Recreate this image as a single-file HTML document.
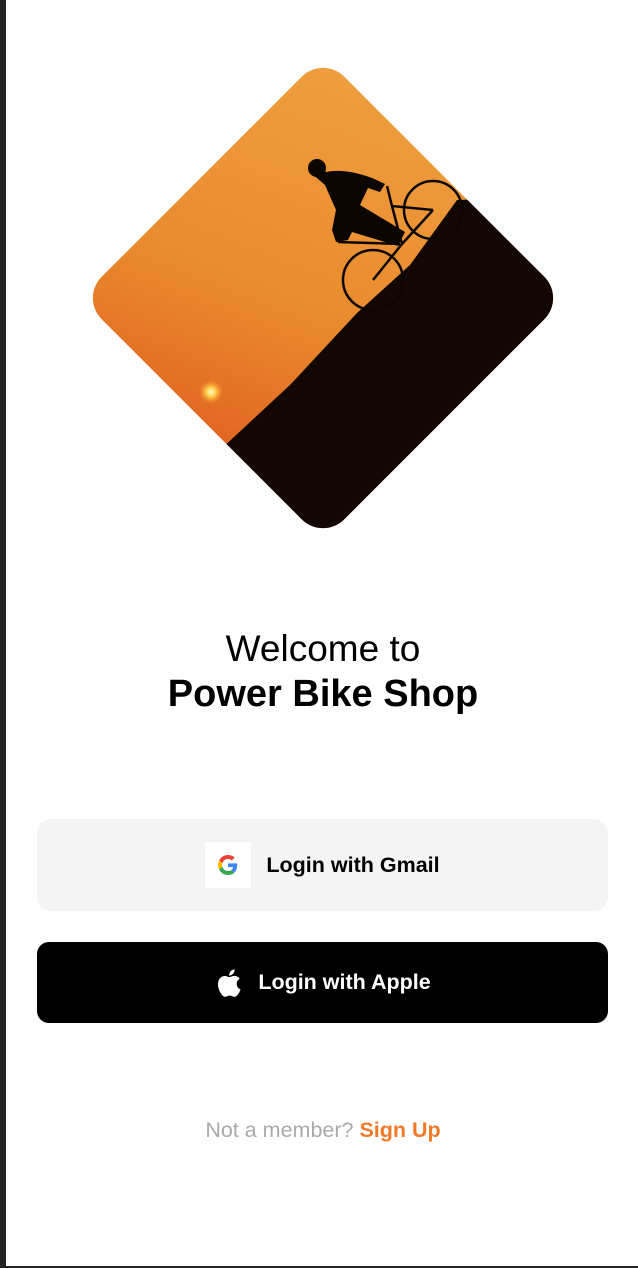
<!DOCTYPE html>
<html><head><meta charset="utf-8"><style>
html,body{margin:0;padding:0}
body{width:638px;height:1268px;position:relative;background:#fff;font-family:"Liberation Sans",sans-serif;overflow:hidden}
.lb{position:absolute;left:0;top:0;width:6px;height:1268px;background:#232323}
.bb{position:absolute;left:0;bottom:0;width:638px;height:2px;background:#232323}
.t1{position:absolute;left:0;width:646px;text-align:center;top:628px;font-size:37px;color:#000}
.t2{position:absolute;left:0;width:646px;text-align:center;top:673px;font-size:38px;font-weight:bold;color:#000}
.btn{position:absolute;left:37px;width:571px;display:flex;align-items:center;justify-content:center;font-size:21.5px;font-weight:bold}
.g{top:819px;height:92px;background:#f4f4f4;border-radius:14px;color:#000}
.a{top:942px;height:81px;background:#000;border-radius:12px;color:#fff}
.gb{width:46px;height:46px;background:#fff;display:flex;align-items:center;justify-content:center;margin-right:15px}
.foot{position:absolute;left:0;width:646px;text-align:center;top:1118px;font-size:21.5px;color:#aaa}
.foot b{color:#f07a2a}
</style></head><body>
<div class="lb"></div><div class="bb"></div>
<svg style="position:absolute;left:0;top:0" width="638" height="560">
<defs>
<clipPath id="c"><rect x="-171.5" y="-171.5" width="343" height="343" rx="30" transform="translate(323 298) rotate(45)"/></clipPath>
<linearGradient id="sky" x1="0.6" y1="0" x2="0.2" y2="1"><stop offset="0" stop-color="#eea040"/><stop offset="0.5" stop-color="#ea8a2e"/><stop offset="1" stop-color="#dc4e18"/></linearGradient>
<radialGradient id="sun"><stop offset="0" stop-color="#fffbd0"/><stop offset="0.35" stop-color="#ffd850"/><stop offset="1" stop-color="#ff9a30" stop-opacity="0"/></radialGradient>
</defs>
<g clip-path="url(#c)">
<rect x="80" y="60" width="490" height="480" fill="url(#sky)"/>
<circle cx="211" cy="392" r="12" fill="url(#sun)"/>
<polygon points="220,450 290,385 357,313 410,265 457,200 600,195 600,560 200,560" fill="#120703"/>
<g fill="none" stroke="#0c0603" stroke-width="2.5">
<circle cx="373" cy="280" r="30"/>
<circle cx="433" cy="210" r="29"/>
<path d="M373 280 L402 244 L433 210 M338 242 L400 244 M402 244 L392 206 L433 210 M392 206 L387 186"/>
</g>
<path d="M310 172 Q318 165 326 172 Q345 168 372 178 L385 184 L380 192 L368 188 L360 205 L405 232 L398 246 L352 232 L348 240 L336 242 L332 230 L336 210 L325 185 Z" fill="#0c0603"/>
<circle cx="317" cy="168" r="9" fill="#0c0603"/>
</g>
</svg>
<div class="t1">Welcome to</div>
<div class="t2">Power Bike Shop</div>
<div class="btn g"><div class="gb"><svg width="20" height="20" viewBox="0 0 48 48"><path fill="#EA4335" d="M24 9.5c3.5 0 6.6 1.2 9.1 3.6l6.8-6.8C35.8 2.4 30.3 0 24 0 14.6 0 6.6 5.4 2.6 13.2l7.9 6.2C12.4 13.7 17.7 9.5 24 9.5z"/><path fill="#4285F4" d="M46.1 24.5c0-1.6-.1-3.1-.4-4.5H24v9h12.4c-.5 2.9-2.2 5.3-4.6 6.9l7.7 6c4.5-4.2 6.600-10.3 6.600-17.4z"/><path fill="#FBBC05" d="M10.5 28.6c-.5-1.4-.8-3-.8-4.6s.3-3.2.8-4.6l-7.9-6.2C.9 16.5 0 20.1 0 24s.9 7.5 2.6 10.8l7.9-6.2z"/><path fill="#34A853" d="M24 48c6.5 0 11.9-2.1 15.8-5.8l-7.7-6c-2.1 1.4-4.9 2.3-8.1 2.3-6.3 0-11.6-4.2-13.5-9.9l-7.9 6.2C6.6 42.6 14.6 48 24 48z"/></svg></div>Login with Gmail</div>
<div class="btn a"><svg width="28" height="32" viewBox="0 0 24 28" style="margin-right:16px"><path fill="#fff" d="M19.6 14.9c0-3.1 2.5-4.6 2.6-4.7-1.4-2.1-3.7-2.4-4.4-2.4-1.9-.2-3.7 1.1-4.6 1.1-1 0-2.4-1.1-4-1-2 0-3.9 1.2-5 3-2.1 3.7-.5 9.2 1.6 12.2 1 1.5 2.2 3.1 3.8 3 1.5-.1 2.1-1 4-1 1.8 0 2.3 1 4 1 1.6 0 2.7-1.5 3.7-3 1.2-1.7 1.6-3.3 1.7-3.4-.1 0-3.3-1.3-3.4-4.8zM16.6 5.8c.8-1 1.4-2.4 1.2-3.8-1.2.1-2.7.8-3.5 1.8-.8.9-1.5 2.3-1.3 3.7 1.3.1 2.7-.7 3.6-1.7z"/></svg>Login with Apple</div>
<div class="foot">Not a member? <b>Sign Up</b></div>
</body></html>
